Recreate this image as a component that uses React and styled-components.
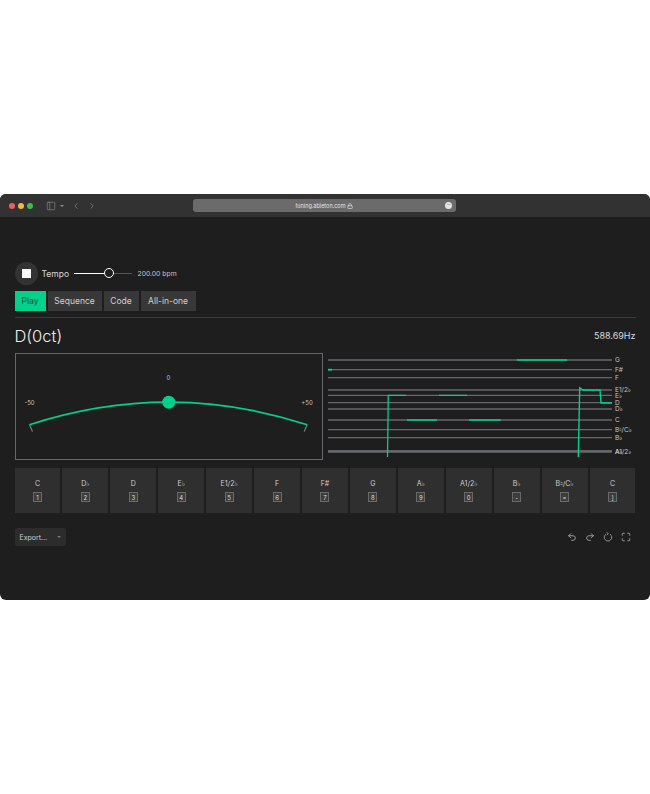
import React from 'react';
import styled, { createGlobalStyle } from 'styled-components';
import { ChevronLeft, ChevronRight, Lock, Maximize, PanelLeft, Redo2, Undo2 } from 'lucide-react';

const Global = createGlobalStyle`
  html, body { margin: 0; padding: 0; background: #fff; }
  body { font-family: Inter, "Liberation Sans", "DejaVu Sans", sans-serif; }
  * { box-sizing: border-box; }
`;

const GREEN = '#00d18b';
const LINE = '#66686e';

const Page = styled.div`
  height: 794px;
  padding-top: 194px;
`;
const Win = styled.div`
  height: 406px;
  background: #1e1e1e;
  border-radius: 6px;
  overflow: hidden;
  color: #d8d8d8;
`;
const TitleBar = styled.div`
  height: 23px;
  background: #323232;
  display: flex;
  align-items: center;
  position: relative;
  padding-left: 9px;
  color: #a0a0a0;
`;
const Dot = styled.span`
  width: 6px;
  height: 6px;
  border-radius: 50%;
  margin-right: 3.2px;
  background: ${p => p.$c};
`;
const SideIcon = styled(PanelLeft)`
  margin-left: 9px;
`;
const Caret = styled.span`
  margin: 0 7px 0 4px;
  width: 0;
  height: 0;
  border-left: 2px solid transparent;
  border-right: 2px solid transparent;
  border-top: 2px solid #8f8f8f;
`;
const NavGap = styled.span`
  width: 6px;
`;
const UrlBar = styled.div`
  position: absolute;
  left: 193px;
  top: 5px;
  width: 263px;
  height: 13px;
  border-radius: 3px;
  background: #6b6b6b;
  display: flex;
  align-items: center;
  justify-content: center;
  gap: 2px;
  font-size: 5.5px;
  color: #e4e4e4;
`;
const Ellipsis = styled.span`
  position: absolute;
  right: 4px;
  top: 3px;
  width: 7px;
  height: 7px;
  border-radius: 50%;
  background: #e4e4e4;
  color: #555;
  font-size: 6px;
  line-height: 5px;
  text-align: center;
  letter-spacing: -0.5px;
`;
const Content = styled.div`
  padding: 45px 14.5px 0 14.5px;
`;
const TempoRow = styled.div`
  display: flex;
  align-items: center;
  height: 23px;
`;
const StopBtn = styled.div`
  width: 23px;
  height: 23px;
  border-radius: 50%;
  background: #333;
  display: flex;
  align-items: center;
  justify-content: center;
  margin-right: 4px;
`;
const StopSquare = styled.span`
  width: 9px;
  height: 9px;
  background: #fff;
`;
const TempoLabel = styled.span`
  font-size: 8.5px;
  width: 32px;
`;
const Slider = styled.div`
  width: 58px;
  height: 1px;
  background: #555;
  position: relative;
  margin-right: 6px;
`;
const SliderFill = styled.div`
  height: 1px;
  width: 31px;
  background: #fff;
`;
const Thumb = styled.span`
  position: absolute;
  left: 30px;
  top: -5px;
  width: 10px;
  height: 10px;
  border-radius: 50%;
  background: #1e1e1e;
  border: 1.5px solid #fff;
`;
const Bpm = styled.span`
  font-size: 6.8px;
  color: #c4c4c4;
`;
const Tabs = styled.div`
  display: flex;
  gap: 2px;
  margin-top: 6px;
  padding-bottom: 6px;
  border-bottom: 1px solid #3a3a3a;
`;
const Tab = styled.div`
  height: 20px;
  width: ${p => p.$w}px;
  display: flex;
  align-items: center;
  justify-content: center;
  font-size: 8.5px;
  background: ${p => (p.$active ? GREEN : '#383838')};
  color: ${p => (p.$active ? '#14493a' : '#d0d0d0')};
`;
const Heading = styled.div`
  display: flex;
  align-items: center;
  justify-content: space-between;
  height: 35px;
`;
const Note = styled.span`
  font-size: 16.5px;
  font-weight: 300;
  color: #f0f0f0;
`;
const Hz = styled.span`
  font-size: 9px;
  color: #d8d8d8;
`;
const Displays = styled.div`
  display: flex;
  gap: 5px;
`;
const Meter = styled.div`
  width: 308.5px;
  height: 107px;
  border: 1.5px solid ${LINE};
`;
const Keys = styled.div`
  display: flex;
  gap: 2px;
  margin-top: 8px;
`;
const Key = styled.div`
  width: 46px;
  height: 45px;
  background: #2f2f2f;
  display: flex;
  flex-direction: column;
  align-items: center;
  padding-top: 11px;
  gap: 4px;
  font-size: 7px;
  color: #cfcfcf;
  white-space: nowrap;
`;
const Cap = styled.span`
  width: 9px;
  height: 10px;
  border: 1px solid #6a6a6a;
  background: #3d3d3d;
  font-size: 6px;
  display: flex;
  align-items: center;
  justify-content: center;
  color: #ddd;
`;
const Footer = styled.div`
  display: flex;
  justify-content: space-between;
  align-items: center;
  margin-top: 15px;
`;
const Export = styled.div`
  width: 51px;
  height: 18px;
  background: #2c2c2c;
  border-radius: 2px;
  display: flex;
  align-items: center;
  justify-content: space-between;
  padding: 0 5px;
  font-size: 7px;
  color: #cfcfcf;
`;
const ExportCaret = styled.span`
  width: 0;
  height: 0;
  border-left: 2px solid transparent;
  border-right: 2px solid transparent;
  border-top: 2px solid #777;
`;
const Tools = styled.div`
  display: flex;
  gap: 8px;
  padding-right: 5px;
  color: #a9adb3;
`;
const MeterText = styled.text`
  font-size: 6px;
  fill: #c4c4c4;
  text-anchor: middle;
`;
const StaffText = styled.text`
  font-size: 6.5px;
  fill: #c4c4c4;
`;

const keys = [
  ['C', '1'], ['D♭', '2'], ['D', '3'], ['E♭', '4'], ['E1/2♭', '5'], ['F', '6'], ['F#', '7'],
  ['G', '8'], ['A♭', '9'], ['A1/2♭', '0'], ['B♭', '-'], ['B♮/C♭', '='], ['C', ']'],
];
const tabs = [['Play', 31, true], ['Sequence', 54], ['Code', 35], ['All-in-one', 55]];
const staff = [
  ['G', 7], ['F#', 16.7], ['F', 24.7], ['E1/2♭', 37], ['E♭', 42.3], ['D', 49.7], ['D♭', 56],
  ['C', 67], ['B♮/C♭', 76.7], ['B♭', 84.7], ['A1/2♭', 98.3], ['A♭', 98.3],
];

function Reset() {
  return (
    <svg width="10" height="10" viewBox="0 0 10 10" fill="none" stroke="currentColor" strokeWidth="0.8">
      <path d="M3 2.2a3.7 3.7 0 1 0 4 0" />
      <path d="M3.6 .6 5.4 1.6 3.8 3" />
    </svg>
  );
}

function MeterChart() {
  return (
    <svg width="305.5" height="104" viewBox="16.5 354.5 305.5 104">
      <MeterText x="169" y="380">0</MeterText>
      <MeterText x="30" y="405.5">-50</MeterText>
      <MeterText x="307.5" y="405.5">+50</MeterText>
      <path d="M30 425.3 33 432M307.7 425.3 304.7 432" stroke="#7a7c82" strokeWidth="1.2" />
      <path d="M30 425.3Q169 380 307.7 425.3" fill="none" stroke={GREEN} strokeWidth="1.7" />
      <circle cx="169.3" cy="402.7" r="6.5" fill={GREEN} />
    </svg>
  );
}

function StaffChart() {
  return (
    <svg width="304" height="107" viewBox="328 353 304 107">
      {staff.map(([name, y], i) => (
        <line key={i} x1="328" x2="612" y1={353 + y} y2={353 + y} stroke={LINE} strokeWidth={name.startsWith('A') ? 2.2 : 1.3} />
      ))}
      {staff.map(([name, y], i) => (
        <StaffText key={i} x="615" y={355.3 + y}>{name}</StaffText>
      ))}
      <g fill="none" stroke={GREEN} strokeWidth="1.3">
        <path d="M517 360H567M439 395.3H467M407 420H437M469 420H500.7" />
        <path d="M328 369.7H332" strokeWidth="1.8" />
        <path d="M387.5 457 388.3 395.3H406" />
        <path d="M578.3 457 579.7 387.7 583 390H600L601 403H612" strokeWidth="1.4" />
      </g>
    </svg>
  );
}

export default function App() {
  return (
    <Page>
      <Global />
      <Win>
        <TitleBar>
          <Dot $c="#ee5f5b" />
          <Dot $c="#f5b83d" />
          <Dot $c="#39c04a" />
          <SideIcon size={10} strokeWidth={1.2} />
          <Caret />
          <ChevronLeft size={10} strokeWidth={1.4} />
          <NavGap />
          <ChevronRight size={10} strokeWidth={1.4} />
          <UrlBar>
            tuning.ableton.com <Lock size={6} strokeWidth={2.5} />
            <Ellipsis>···</Ellipsis>
          </UrlBar>
        </TitleBar>
        <Content>
          <TempoRow>
            <StopBtn><StopSquare /></StopBtn>
            <TempoLabel>Tempo</TempoLabel>
            <Slider>
              <SliderFill />
              <Thumb />
            </Slider>
            <Bpm>200.00 bpm</Bpm>
          </TempoRow>
          <Tabs>
            {tabs.map(([label, w, active]) => (
              <Tab key={label} $w={w} $active={active}>{label}</Tab>
            ))}
          </Tabs>
          <Heading>
            <Note>D(0ct)</Note>
            <Hz>588.69Hz</Hz>
          </Heading>
          <Displays>
            <Meter><MeterChart /></Meter>
            <StaffChart />
          </Displays>
          <Keys>
            {keys.map(([name, cap], i) => (
              <Key key={i}>
                {name}
                <Cap>{cap}</Cap>
              </Key>
            ))}
          </Keys>
          <Footer>
            <Export>Export... <ExportCaret /></Export>
            <Tools>
              <Undo2 size={10} strokeWidth={2} />
              <Redo2 size={10} strokeWidth={2} />
              <Reset />
              <Maximize size={10} strokeWidth={2} />
            </Tools>
          </Footer>
        </Content>
      </Win>
    </Page>
  );
}
